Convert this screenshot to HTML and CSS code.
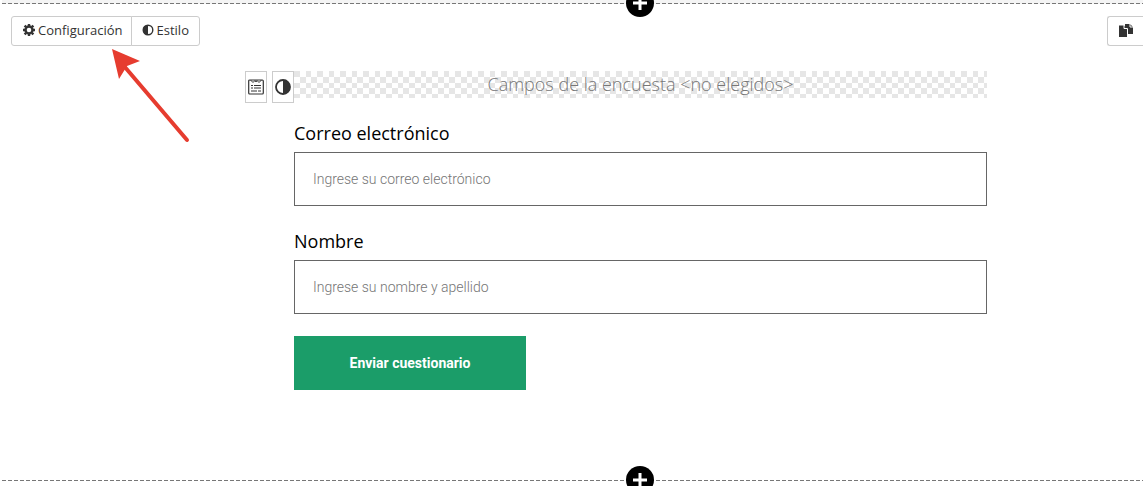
FILE: index.html
```html
<!DOCTYPE html>
<html lang="es">
<head>
<meta charset="utf-8">
<title>Editor de formulario</title>
<link rel="stylesheet" href="styles.css">
</head>
<body>
<main class="stage">
  <div class="divider divider-top">
    <button class="add" type="button" aria-label="Añadir bloque"><svg width="28" height="28" viewBox="0 0 28 28"><path d="M14 7v14M7 14h14" stroke="#fff" stroke-width="3"/></svg></button>
  </div>
  <div class="toolbar">
    <div class="group">
      <button class="tool" type="button"><svg width="12" height="12" viewBox="0 0 12 12"><circle cx="6" cy="6" r="3.5" fill="none" stroke="#333" stroke-width="2.4"/><path d="M6 0v2M6 10v2M0 6h2M10 6h2M1.600 1.600l1.600 1.600M8.800 8.800l1.600 1.600M10.400 1.600L8.800 3.200M3.200 8.800l-1.600 1.600" stroke="#333" stroke-width="2.4"/></svg><span>Configuración</span></button>
      <button class="tool tool-style" type="button"><svg width="12" height="12" viewBox="0 0 12 12"><circle cx="6" cy="6" r="4.8" fill="none" stroke="#333" stroke-width="1.4"/><path d="M6 1a5 5 0 0 0 0 10z" fill="#333"/></svg><span>Estilo</span></button>
    </div>
    <button class="tool tool-copy" type="button" aria-label="Duplicar"><svg width="14" height="14" viewBox="0 0 14 14"><path d="M6 1h5l3 3v7H6z" fill="#333"/><path d="M11 1v3h3" fill="none" stroke="#fff"/><path d="M0 2.500h5l3 3V14H0z" fill="#333"/><path d="M5 2v3.500h3.500V14" fill="none" stroke="#fff"/></svg></button>
    <svg class="arrow" width="80" height="96" viewBox="0 0 80 96"><path d="M14 17L77 91" stroke="#e63c2f" stroke-width="4" stroke-linecap="round"/><path d="M2 0L30 12L17 17L9 30z" fill="#e63c2f"/></svg>
  </div>
  <form class="form">
    <div class="side">
      <button class="mini" type="button" aria-label="Campos"><svg width="16" height="16" viewBox="0 0 16 16"><rect x=".7" y="1" width="14.600" height="14" rx="1" fill="none" stroke="#333" stroke-width="1.200"/><path d="M2.500 1l2.500 2.500L7 1.500l1 1.500 1-1.500 2 2L13.500 1M3 6.500h2M6 6.500h7M3 9h2M6 9h7M3 12h6M10 12h3" fill="none" stroke="#333"/></svg></button>
      <button class="mini" type="button" aria-label="Estilo"><svg width="16" height="16" viewBox="0 0 16 16"><circle cx="8" cy="8" r="7" fill="#fff" stroke="#333" stroke-width="1.800"/><path d="M8 1a7 7 0 0 1 0 14z" fill="#333"/></svg></button>
    </div>
    <div class="notice">Campos de la encuesta &lt;no elegidos&gt;</div>
    <label class="label" for="correo">Correo electrónico</label>
    <input class="field" id="correo" type="email" placeholder="Ingrese su correo electrónico">
    <label class="label" for="nombre">Nombre</label>
    <input class="field" id="nombre" type="text" placeholder="Ingrese su nombre y apellido">
    <button class="submit" type="submit">Enviar cuestionario</button>
  </form>
  <div class="divider">
    <button class="add" type="button" aria-label="Añadir bloque"><svg width="28" height="28" viewBox="0 0 28 28"><path d="M14 7v14M7 14h14" stroke="#fff" stroke-width="3"/></svg></button>
  </div>
</main>
</body>
</html>
```

FILE: styles.css
```css
* { box-sizing: border-box; }
body { margin: 0; background: #fff; font-family: "Open Sans", sans-serif; color: #333; }
button { font: inherit; color: inherit; background: #fff; padding: 0; }
svg { display: block; flex: none; }
.stage { min-height: 100vh; overflow: hidden; }
.divider { position: relative; height: 4px; margin-left: 2px; background: repeating-linear-gradient(90deg, #777 0 4px, transparent 4px 6px) left bottom / 100% 1px no-repeat; }
.divider-top { background-color: #f4f4f4; }
.add { position: absolute; left: calc(50% + 53px); top: -11px; width: 28px; height: 28px; border: 0; border-radius: 50%; background: #000; }
.toolbar { position: relative; display: flex; justify-content: space-between; padding: 12px 0 0 11px; }
.group { display: flex; }
.tool { display: flex; align-items: center; gap: 3px; height: 30px; padding: 0 8px 2px 11px; border: 1px solid #ccc; border-radius: 3px 0 0 3px; font-size: 13px; line-height: 18px; }
.tool-style { margin-left: -1px; padding: 0 10px 2px 10px; border-radius: 0 3px 3px 0; }
.tool-copy { width: 36px; border-right: 0; }
.arrow { position: absolute; left: 110px; top: 45px; }
.form { position: relative; display: flex; flex-direction: column; margin: 25px 156px 87px 294px; }
.side { position: absolute; right: 100%; top: 0; display: flex; gap: 5px; }
.mini { display: grid; place-items: center; width: 22px; height: 32px; border: 1px solid #ccc; }
.notice { height: 27px; margin-bottom: 22px; text-align: center; font-size: 18px; font-weight: 300; line-height: 27px; color: #777; background: url("data:image/svg+xml,%3Csvg xmlns='http://www.w3.org/2000/svg' width='23' height='23'%3E%3Cpath fill='%23e6e6e6' d='M0 0h6v6H0zM12 0h5v6h-5zM6 6h6v6H6zM17 6h6v6h-6zM0 12h6v5H0zM12 12h5v5h-5zM6 17h6v6H6zM17 17h6v6h-6z'/%3E%3C/svg%3E"); }
.label { margin-bottom: 5px; font-size: 18px; line-height: 27px; color: #000; }
.field { height: 54px; margin-bottom: 22px; padding: 0 18px; border: 1px solid #666; font: 300 14px Roboto, sans-serif; }
.field::placeholder { color: #757575; opacity: 1; }
.submit { align-self: flex-start; width: 232px; height: 54px; border: 0; background: #1b9d69; color: #fff; font: 700 14px Roboto, sans-serif; }
```
